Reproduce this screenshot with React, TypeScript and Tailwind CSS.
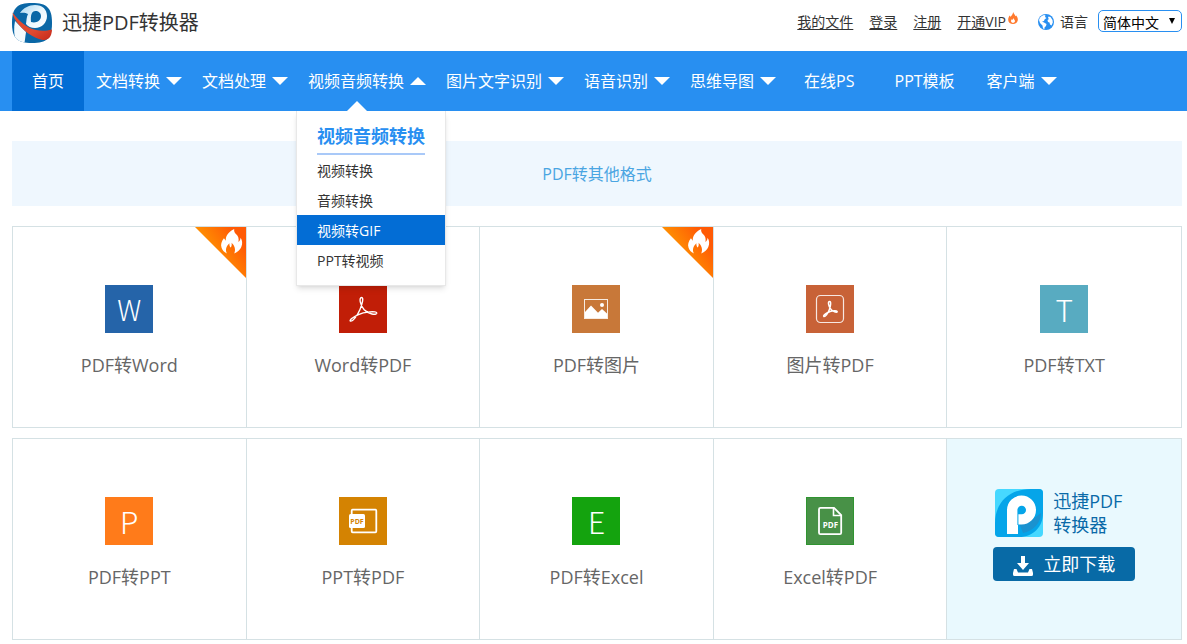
import React from "react";
import clsx from "clsx";

interface NavItem {
  label: string;
  menu?: boolean;
  open?: boolean;
}

const navItems: NavItem[] = [
  { label: "文档转换", menu: true },
  { label: "文档处理", menu: true },
  { label: "视频音频转换", menu: true, open: true },
  { label: "图片文字识别", menu: true },
  { label: "语音识别", menu: true },
  { label: "思维导图", menu: true },
  { label: "在线PS" },
  { label: "PPT模板" },
  { label: "客户端", menu: true },
];

const videoMenu = ["视频转换", "音频转换", "视频转GIF", "PPT转视频"];

interface Tool {
  label: string;
  color: string;
  icon: React.ReactNode;
  hot?: boolean;
}

const topTools: Tool[] = [
  { label: "PDF转Word", color: "bg-[#2564a9]", icon: <Letter>W</Letter>, hot: true },
  { label: "Word转PDF", color: "bg-[#c11e07]", icon: <AcrobatIcon /> },
  { label: "PDF转图片", color: "bg-[#c87839]", icon: <PictureIcon />, hot: true },
  { label: "图片转PDF", color: "bg-[#c86237]", icon: <FramedAcrobatIcon /> },
  { label: "PDF转TXT", color: "bg-[#58abc1]", icon: <Letter large>T</Letter> },
];

const bottomTools: Tool[] = [
  { label: "PDF转PPT", color: "bg-[#ff7b1a]", icon: <Letter large>P</Letter> },
  { label: "PPT转PDF", color: "bg-[#d48302]", icon: <SlidePdfIcon /> },
  { label: "PDF转Excel", color: "bg-[#14a30e]", icon: <Letter large>E</Letter> },
  { label: "Excel转PDF", color: "bg-[#489147] border border-[#2f9430]", icon: <FilePdfIcon /> },
];

function Letter({ children, large }: { children: string; large?: boolean }) {
  return (
    <span
      className={clsx(
        "font-['Noto_Sans_CJK_SC','Open_Sans',sans-serif] leading-none text-white",
        large ? "text-[30px] font-light" : "text-[28px] font-light"
      )}
    >
      {children}
    </span>
  );
}

function AcrobatIcon() {
  return (
    <svg className="size-12" viewBox="0 0 48 48" fill="none" stroke="#fff" strokeWidth="1.4">
      <path d="M22.6 12.5c-2.8 0-1.6 7.5 2.6 12.3 4.2 4.4 12.2 5.6 12.6 3.4.4-2.6-12.6-1.6-19 1.6-6 3-8.6 5.6-7.4 6.3 2.2.8 7-5.6 9.6-11.6 2.2-5.4 4-12 1.6-12z" />
    </svg>
  );
}

function FramedAcrobatIcon() {
  return (
    <svg className="size-12" viewBox="0 0 48 48" fill="none" stroke="#fff">
      <rect x="10.5" y="10.5" width="27" height="27" rx="4" strokeWidth="1.2" opacity=".85" />
      <path
        strokeWidth="1.5"
        d="M23.6 16.5c-2 0-1.2 4.4 1.2 7.6 2 2.6 6 4 6.4 2.6.4-1.6-5.6-1.2-9.4.8-3 1.4-4.8 3.4-4 4 1.4.8 4-3 5.4-6.6 1.4-3.6 2.2-8.4.4-8.400z"
      />
    </svg>
  );
}

function PictureIcon() {
  return (
    <svg className="size-12" viewBox="0 0 48 48" fill="none">
      <rect x="12.5" y="14.5" width="23" height="19" stroke="#fff" opacity=".85" />
      <path d="M13 27l6-6.6 7 7.400 4-3.800 5 4.600V33H13z" fill="#fff" />
      <circle cx="30" cy="20" r="2" fill="#fff" />
    </svg>
  );
}

function SlidePdfIcon() {
  return (
    <svg className="size-12" viewBox="0 0 48 48" fill="none">
      <path d="M12.7 17v-3.300a1 1 0 0 1 1-1h22.600a1 1 0 0 1 1 1v20.600a1 1 0 0 1-1 1H13.700a1 1 0 0 1-1-1V30" stroke="#fff" strokeWidth="1.8" />
      <rect x="10" y="17" width="16" height="14" rx="1.5" fill="#fff" />
      <text x="18" y="26.5" textAnchor="middle" fontSize="7" fontWeight="700" fill="#d48302" fontFamily="Open Sans, sans-serif">
        PDF
      </text>
    </svg>
  );
}

function FilePdfIcon() {
  return (
    <svg className="size-12 shrink-0" viewBox="0 0 48 48" fill="none">
      <path d="M14.500 10.800H28l7.200 7.200v17.700a1.500 1.500 0 0 1-1.500 1.500H14.500a1.500 1.500 0 0 1-1.500-1.500V12.300a1.500 1.500 0 0 1 1.500-1.500z" stroke="#fff" strokeWidth="1.8" />
      <path d="M27.500 11v7.500H35" stroke="#fff" strokeWidth="1.6" />
      <text x="24.5" y="30.5" textAnchor="middle" fontSize="8" fontWeight="700" fill="#fff" fontFamily="Open Sans, sans-serif">
        PDF
      </text>
    </svg>
  );
}

function SiteLogo() {
  return (
    <svg className="size-10" viewBox="0 0 40 40">
      <defs>
        <clipPath id="logo-clip">
          <path d="M20 0c15 0 20 5 20 20s-5 20-20 20S0 35 0 20 5 0 20 0z" />
        </clipPath>
        <linearGradient id="logo-red" x1="0" y1="0" x2="1" y2="1">
          <stop offset="0" stopColor="#e8492b" />
          <stop offset=".6" stopColor="#e04a30" />
          <stop offset="1" stopColor="#c4281b" />
        </linearGradient>
        <linearGradient id="logo-p" x1="0" y1="0" x2="1" y2="1">
          <stop offset="0" stopColor="#a9d8f2" />
          <stop offset=".5" stopColor="#e9f6fd" />
          <stop offset="1" stopColor="#fff" />
        </linearGradient>
      </defs>
      <g clipPath="url(#logo-clip)">
        <path d="M0 0h40v40H0z" fill="#0a67a6" />
        <path
          d="M8 10C11 5 17 2 23 2c7.500 0 12 4.500 12 11s-5 12-12 12c-4 0-7-1.500-9-4 .5-4 .5-7 2-10-2.500-1.500-5-1.500-8-1zm11 9c5 1.500 10-1 10-6 0-3-2.500-5-5.500-5-4 0-5 4-4.500 11z"
          fill="url(#logo-p)"
          fillRule="evenodd"
        />
        <path d="M3 18l11 11-1.500 11H4C2 33 1.500 25 3 18z" fill="#f4fafd" />
      </g>
      <path
        d="M.5 9.500C6 17 14 25 24 27c5 1 11 .8 16-.6-.2 3.400-1 6.400-2.400 8-1.600 1.800-4 2.600-7 2.600C21 35 10 27 4 18 2 15 .8 12 .5 9.500z"
        fill="url(#logo-red)"
      />
    </svg>
  );
}

function AppLogo() {
  return (
    <svg className="size-12 shrink-0" viewBox="0 0 48 48">
      <defs>
        <clipPath id="app-clip">
          <rect width="48" height="48" rx="4" />
        </clipPath>
      </defs>
      <g clipPath="url(#app-clip)">
        <path d="M0 0h48v48H0z" fill="#46d8ff" />
        <path d="M36 0h12v24c0 14-10 24-24 24H0V34C0 14 14 0 36 0z" fill="#05a5e9" />
        <path d="M38 30l8-6c0 10-8 18-18 20l-4-10z" fill="#1b92cf" />
        <path d="M12 45V21a14.500 14.500 0 1 1 14.500 14.500H23V45z" fill="#fff" />
        <path d="M22.400 36V21a4.300 4.300 0 1 1 4.300 4.300h-3.300V36z" fill="#05a5e9" />
      </g>
    </svg>
  );
}

function GlobeIcon() {
  return (
    <svg className="size-4" viewBox="0 0 16 16">
      <circle cx="8" cy="8" r="8" fill="#288ff1" />
      <path d="M1 6C1.500 3.500 3.500 1.500 6 1l1.500.5-.5 1.500 1.500 1-2 1.500L6 7 4 7.500l2 1 2.500 1.500-.5 2-1.500 1.500v1.500L5 14.500l-.5-3L2 9z" fill="#fff" />
      <path d="M10.500 2.500l2 .5 2 3 .3 2.500-1.300 3-1.500-1-.5-2-1.500-.5-.5-2 1.500-1-1-1z" fill="#fff" />
    </svg>
  );
}

function SmallFlame() {
  return (
    <svg className="absolute top-0 left-full ml-0.5 h-3 w-2.5" viewBox="0 0 10 12">
      <path d="M5.200 0c.4 2 2 2.800 2.300 4.200l.8-.8C9.400 5 10 6.500 9.800 8c-.3 2.500-2.300 4-4.800 4S.3 10.400.2 8C.1 6 1 5 1.400 3.600l1.200 1.200C3.800 3.600 4.800 2 5.200 0z" fill="#ff7a2e" />
      <path d="M5.300 6c.2 1.200 1.700 1.700 1.700 3 0 1.200-.9 1.800-2 1.800S3 10.200 3 9c0-.8.4-1.200.7-1.700l.6.6C4.800 7.400 5.200 6.800 5.300 6z" fill="#fff" />
    </svg>
  );
}

function HotCorner() {
  return (
    <svg className="absolute top-0 right-0 size-[51px]" viewBox="0 0 52 52">
      <defs>
        <linearGradient id="hot" x1="0" y1=".5" x2=".7" y2="0">
          <stop offset="0" stopColor="#ffa800" />
          <stop offset="1" stopColor="#ff5a05" />
        </linearGradient>
      </defs>
      <path d="M0 0h52v52z" fill="url(#hot)" />
      <path
        d="M40 2c-7 3.500-9 8-8.500 12l-2-2.500c-2.500 3-3.500 6.500-2.500 9.500.7 2.700 2.600 4.700 5.500 6-2-4-.5-7.500 2.500-10.500 0 2.500.5 3.500 1.500 4.500.8-1.500 1.200-3 .8-5 3.200 3 4.500 7 2.700 11 3.500-1.200 6-3.500 7.200-6.500 1.500-3.500 1-7-.7-9.500-.2 2-1 3.500-2.200 4.300.7-3.300-.2-5.800-2.300-7.800C40.500 6 39.500 4 40 2z"
        fill="#fff"
      />
    </svg>
  );
}

function Arrow({ up }: { up?: boolean }) {
  return (
    <svg className="h-2 w-4" viewBox="0 0 16 8" fill="#fff">
      {up ? <path d="M0 8l8-8 8 8z" /> : <path d="M0 0h16L8 8z" />}
    </svg>
  );
}

function TopLinks() {
  const linkClass = "underline underline-offset-2 hover:text-[#036dd5]";

  return (
    <div className="flex items-end gap-4 text-sm leading-5 text-[#333]">
      <a href="#" className={linkClass}>我的文件</a>
      <a href="#" className={linkClass}>登录</a>
      <a href="#" className={linkClass}>注册</a>
      <a href="#" className="relative mr-4">
        <span className={linkClass}>开通VIP</span>
        <SmallFlame />
      </a>
      <div className="flex items-end">
        <span className="pb-0.5">
          <GlobeIcon />
        </span>
        <label htmlFor="language" className="mr-2.5 ml-1.5">语言</label>
        <div className="relative">
          <select
            id="language"
            className="block h-[22px] w-[84px] appearance-none rounded-[5px] border border-[#288ff1] bg-white pt-0.5 pl-1 text-sm leading-5 text-black"
          >
            <option>简体中文</option>
            <option>English</option>
          </select>
          <svg className="pointer-events-none absolute top-2 right-1.5 h-1.5 w-2" viewBox="0 0 8 6">
            <path d="M1 0h6L4 6z" fill="#000" />
          </svg>
        </div>
      </div>
    </div>
  );
}

function VideoMenu() {
  return (
    <div className="absolute top-full left-0 z-10 w-[150px] border border-t-0 border-[#e8e8e8] bg-white pb-2.5 shadow-md">
      <svg className="absolute bottom-full left-[50px] h-2.5 w-5" viewBox="0 0 20 10">
        <path d="M0 10L10 0l10 10z" fill="#fff" />
      </svg>
      <h2 className="mx-5 border-b-2 border-[#a9c9f8] pt-[11px] pb-[3px] text-lg leading-7 font-bold whitespace-nowrap text-[#288ff1]">
        视频音频转换
      </h2>
      <ul className="text-sm">
        {videoMenu.map((name) => (
          <li key={name}>
            <a
              href="#"
              className={clsx(
                "block px-5 pt-0.5 leading-7",
                name === "视频转GIF" ? "bg-[#036dd5] text-white" : "text-[#333]"
              )}
            >
              {name}
            </a>
          </li>
        ))}
      </ul>
    </div>
  );
}

function ToolCell({ tool }: { tool: Tool }) {
  return (
    <a href="#" className="relative flex flex-col items-center border-r border-[#d5e1e4] pt-[58px] pb-12 last:border-r-0">
      {tool.hot && <HotCorner />}
      <span className={clsx("flex size-12 items-center justify-center", tool.color)}>{tool.icon}</span>
      <span className="mt-[18px] text-lg leading-7 text-[#666]">{tool.label}</span>
    </a>
  );
}

function DownloadCell() {
  return (
    <div className="flex flex-col items-center bg-[#e9f9fe] pt-[50px]">
      <div className="w-[142px]">
        <div className="flex items-center gap-2.5 pl-0.5 text-lg leading-6 text-[#0a6aa8]">
          <AppLogo />
          <p>
            迅捷PDF
            <br />
            转换器
          </p>
        </div>
        <button className="mt-2.5 flex h-[34px] w-full items-center justify-center gap-2.5 rounded-[4px] bg-[#086aa6] text-lg leading-6 text-white">
          <svg className="mt-1 size-5" viewBox="0 0 20 20" fill="#fff">
            <path d="M8 0h4v7h4l-6 7-6-7h4z" />
            <path d="M1 13h2.500l1.500 3.500h10l1.500-3.500H19l1 4v1.500a1.500 1.500 0 0 1-1.500 1.500h-17A1.500 1.500 0 0 1 0 18.500V17z" />
          </svg>
          立即下载
        </button>
      </div>
    </div>
  );
}

export default function App() {
  return (
    <div className="min-h-screen bg-white pb-1 font-['Open_Sans','Noto_Sans_CJK_SC',sans-serif]">
      <header className="flex h-[51px] items-start justify-between pr-[5px] pl-3">
        <a href="#" className="flex items-center gap-2.5 pt-[3px] text-xl leading-9 text-[#333]">
          <SiteLogo />
          <span>迅捷PDF转换器</span>
        </a>
        <div className="pt-2.5">
          <TopLinks />
        </div>
      </header>

      <nav className="flex h-[60px] bg-[#288ff1] pl-3 text-base leading-[60px] whitespace-nowrap text-white">
        <a href="#" className="bg-[#036dd5] px-5">首页</a>
        {navItems.map((item) => (
          <div key={item.label} className="relative">
            <a href="#" className={clsx("flex items-center", item.menu ? "gap-1.5 pr-2 pl-3" : "px-5")}>
              {item.label}
              {item.menu && <Arrow up={item.open} />}
            </a>
            {item.open && <VideoMenu />}
          </div>
        ))}
      </nav>

      <main className="pr-[5px] pl-3">
        <h1 className="mt-[30px] bg-[#eff7fe] pt-px text-center text-base leading-[64px] text-[#4aa5e2]">
          PDF转其他格式
        </h1>
        <section className="mt-5 grid grid-cols-5 border border-[#d5e1e4]">
          {topTools.map((tool) => (
            <ToolCell key={tool.label} tool={tool} />
          ))}
        </section>
        <section className="mt-2.5 grid grid-cols-5 border border-[#d5e1e4]">
          {bottomTools.map((tool) => (
            <ToolCell key={tool.label} tool={tool} />
          ))}
          <DownloadCell />
        </section>
      </main>
    </div>
  );
}
